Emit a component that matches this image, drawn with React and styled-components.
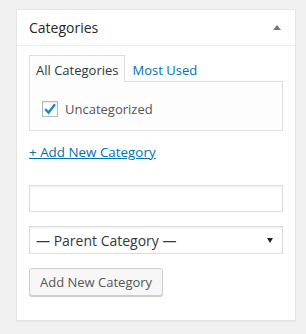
import styled, { createGlobalStyle } from 'styled-components';

const GlobalStyle = createGlobalStyle`
  html, body {
    margin: 0;
    padding: 0;
    background: #f1f1f1;
    font-family: "Open Sans", "Liberation Sans", sans-serif;
  }
`;

const Page = styled.div`
  padding: 9px 10px 13px 16px;
`;

const Box = styled.div`
  width: 278px;
  background: #fff;
  border: 1px solid #e5e5e5;
  box-shadow: 0 1px 1px rgba(0, 0, 0, 0.04);
`;

const Header = styled.div`
  height: 35px;
  display: flex;
  align-items: center;
  justify-content: space-between;
  padding: 0 12px;
  border-bottom: 1px solid #eee;
`;

const Title = styled.h2`
  margin: 0;
  font-size: 14px;
  font-weight: 400;
  color: #23282d;
  line-height: 1;
`;

const Toggle = styled.span`
  width: 0;
  height: 0;
  border-left: 4px solid transparent;
  border-right: 4px solid transparent;
  border-bottom: 5px solid #72777c;
  margin-right: 2px;
`;

const Inside = styled.div`
  padding: 9px 12px 24px;
`;

const Tabs = styled.ul`
  display: flex;
  margin: 0;
  padding: 0;
  list-style: none;
`;

const Tab = styled.li`
  display: flex;
  align-items: center;
  padding: 1px 6px 0;
  font-size: 13px;
  border: 1px solid ${(p) => (p.$active ? '#ddd' : 'transparent')};
  border-bottom: none;
  background: ${(p) => (p.$active ? '#fdfdfd' : 'transparent')};
  color: ${(p) => (p.$active ? '#32373c' : '#0073aa')};
  margin-bottom: -1px;
  position: relative;
  z-index: 1;
  height: 27px;
  box-sizing: border-box;
`;

const Panel = styled.div`
  border: 1px solid #ddd;
  background: #fdfdfd;
  height: 50px;
  box-sizing: border-box;
  display: flex;
  align-items: flex-start;
  padding: 18px 12px 0;
`;

const CheckRow = styled.label`
  display: flex;
  align-items: center;
  gap: 7px;
  font-size: 13px;
  color: #555;
`;

const Check = styled.span`
  width: 16px;
  height: 16px;
  box-sizing: border-box;
  border: 1px solid #b4b9be;
  background: #fff;
  box-shadow: inset 0 1px 2px rgba(0, 0, 0, 0.1);
  display: flex;
  align-items: center;
  justify-content: center;
`;

const AddLink = styled.a`
  display: inline-block;
  margin-top: 12px;
  font-size: 13.4px;
  color: #0073aa;
  text-decoration: underline;
  line-height: 19px;
`;

const TextInput = styled.input`
  display: block;
  width: 100%;
  box-sizing: border-box;
  height: 27px;
  margin-top: 23px;
  border: 1px solid #ddd;
  box-shadow: inset 0 1px 2px rgba(0, 0, 0, 0.07);
  background: #fff;
  outline: none;
`;

const Select = styled.div`
  height: 28px;
  margin-top: 14px;
  box-sizing: border-box;
  border: 1px solid #ddd;
  background: #fff;
  display: flex;
  align-items: center;
  justify-content: space-between;
  padding: 0 9px 0 6px;
  font-size: 14px;
  color: #32373c;
  box-shadow: inset 0 1px 2px rgba(0, 0, 0, 0.07);
`;

const Caret = styled.span`
  width: 0;
  height: 0;
  border-left: 3px solid transparent;
  border-right: 3px solid transparent;
  border-top: 5px solid #222;
`;

const Button = styled.button`
  margin-top: 14px;
  height: 28px;
  padding: 0 10px 1px;
  font-family: inherit;
  font-size: 13px;
  color: #555;
  background: #f7f7f7;
  border: 1px solid #ccc;
  border-radius: 3px;
  box-shadow: 0 1px 0 #ccc;
`;

export default function App() {
  return (
    <>
      <GlobalStyle />
      <Page>
        <Box>
          <Header>
            <Title>Categories</Title>
            <Toggle />
          </Header>
          <Inside>
            <Tabs>
              <Tab $active>All Categories</Tab>
              <Tab>Most Used</Tab>
            </Tabs>
            <Panel>
              <CheckRow>
                <Check>
                  <svg width="14" height="14" viewBox="0 0 14 14">
                    <path d="M2.2 7.2 L5.6 10.6 L12 2.2" fill="none" stroke="#1e8cbe" strokeWidth="2.4" />
                  </svg>
                </Check>
                Uncategorized
              </CheckRow>
            </Panel>
            <AddLink>+ Add New Category</AddLink>
            <TextInput />
            <Select>
              <span>— Parent Category —</span>
              <Caret />
            </Select>
            <Button>Add New Category</Button>
          </Inside>
        </Box>
      </Page>
    </>
  );
}
